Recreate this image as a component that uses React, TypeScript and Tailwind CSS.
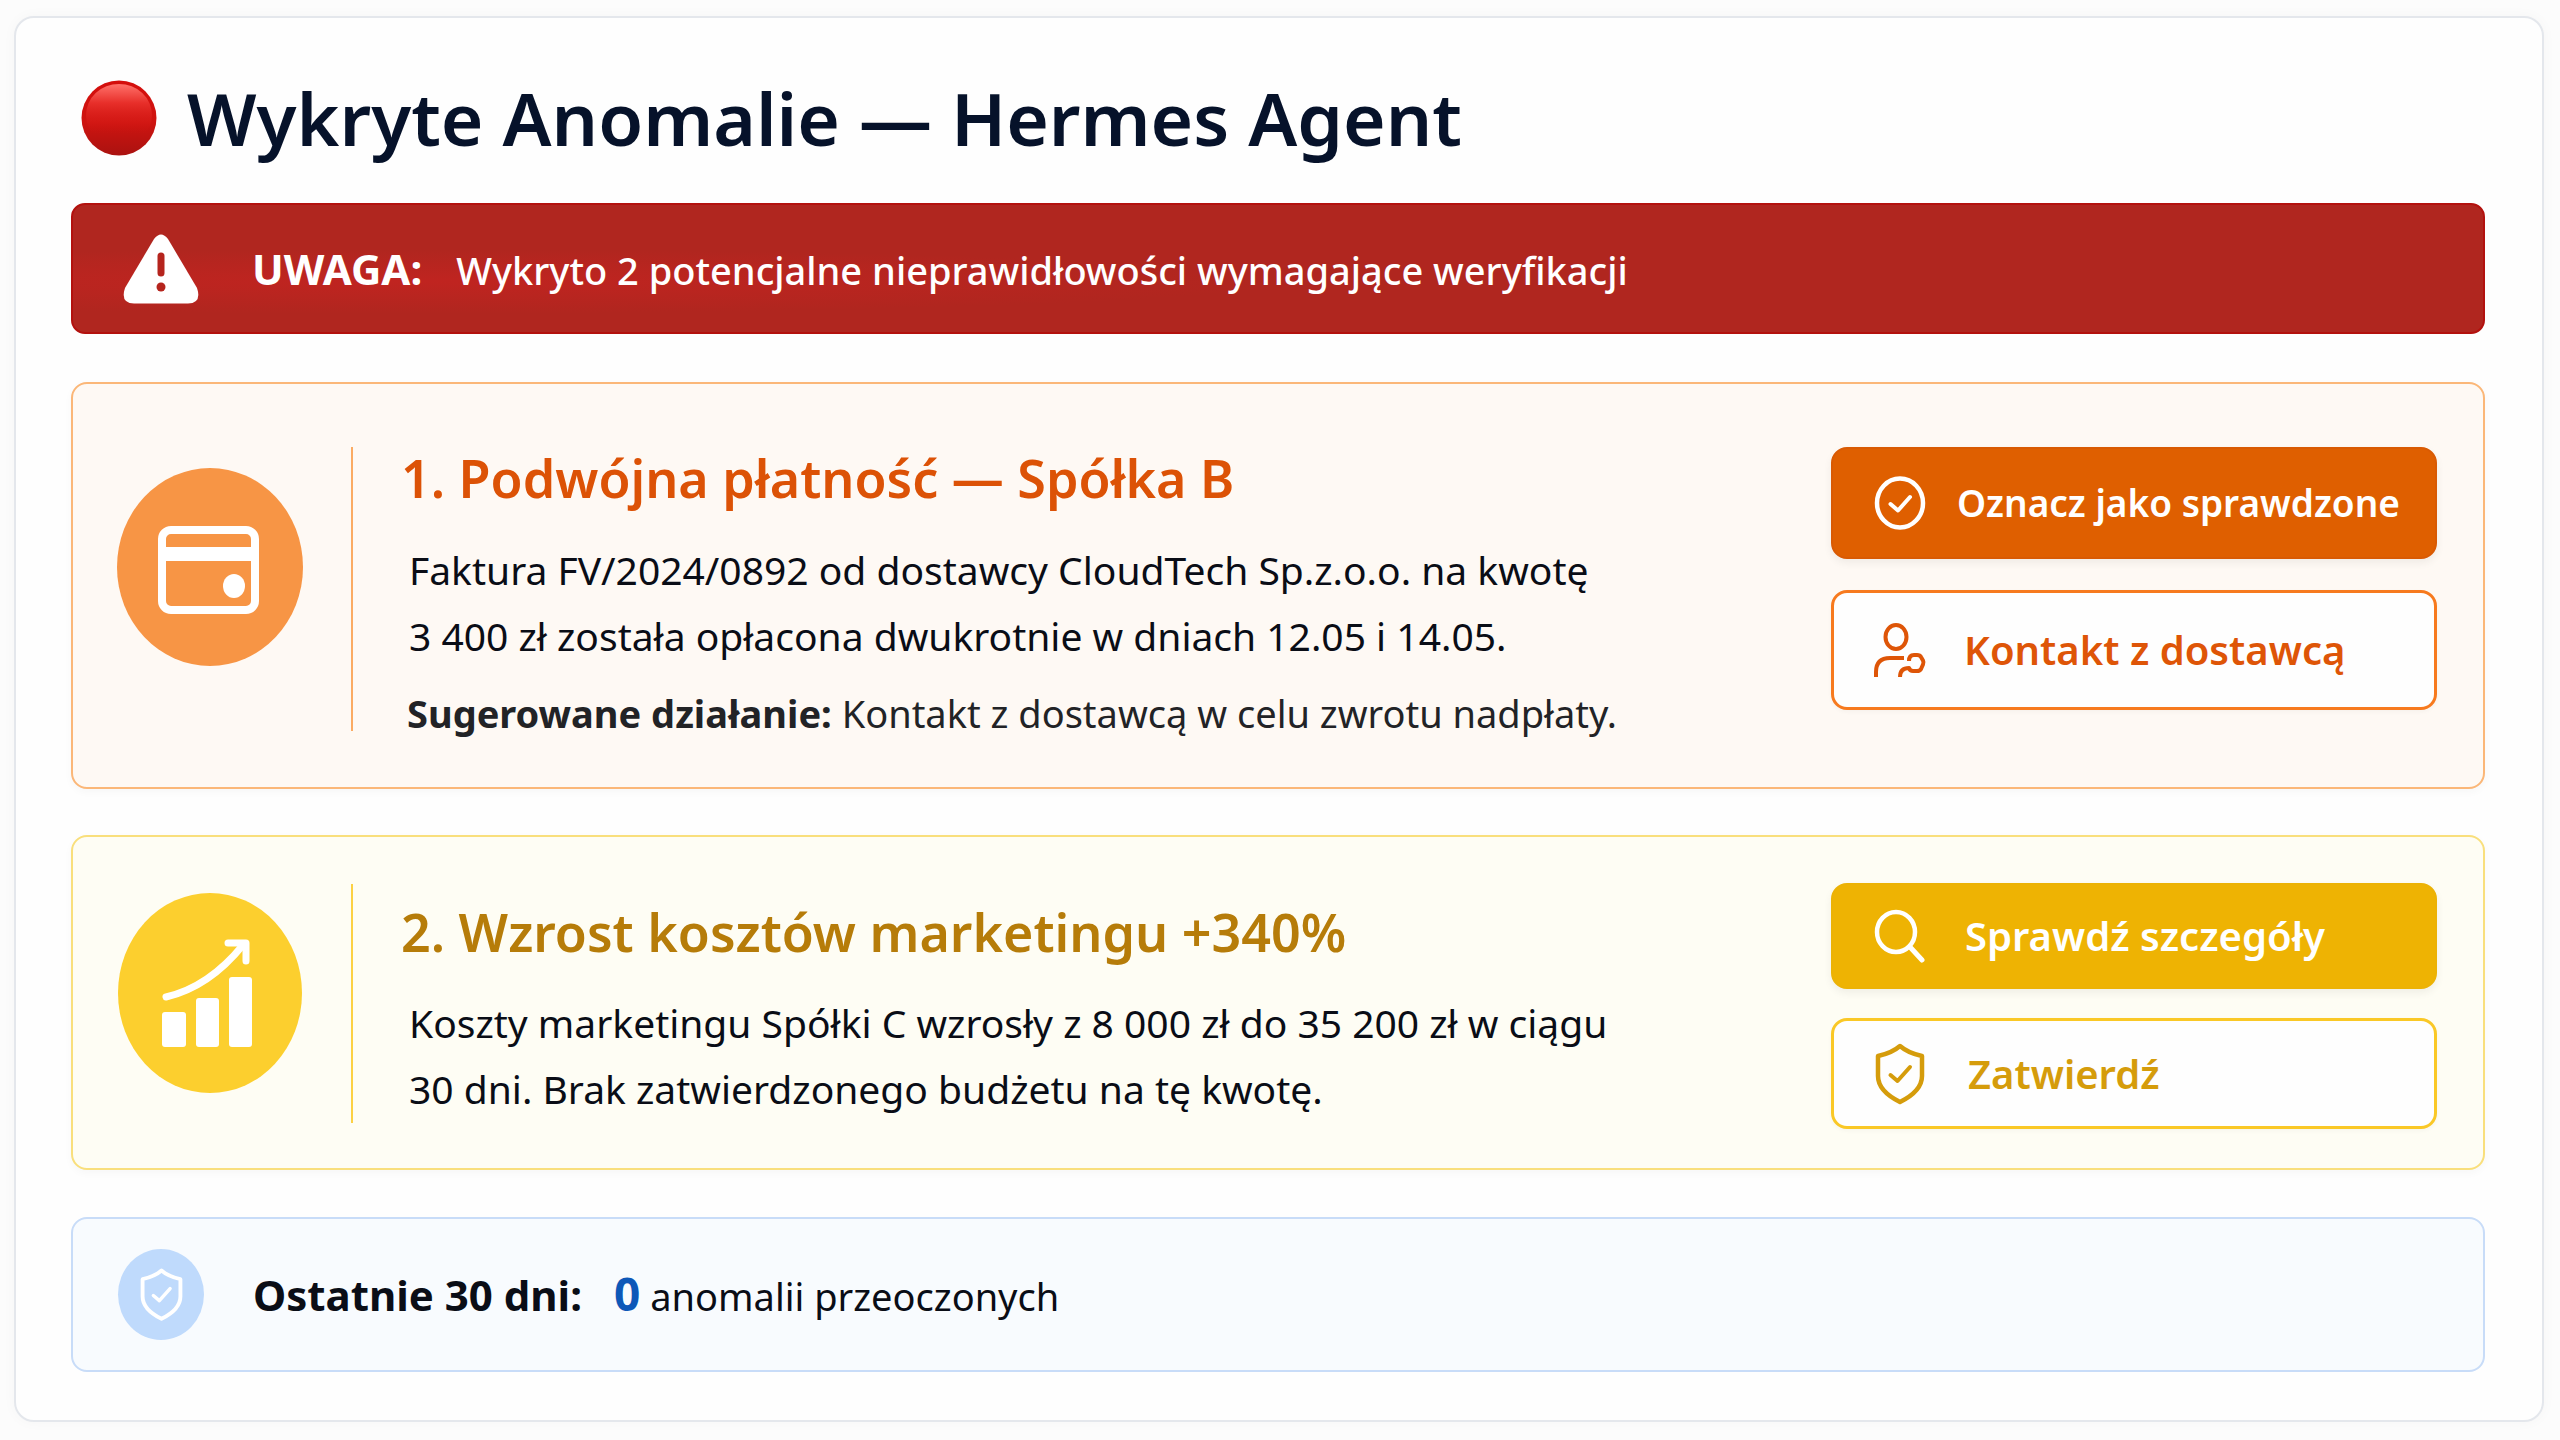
import type { ReactNode } from "react";

function RedBall() {
  return (
    <svg viewBox="0 0 76 76" className="size-[76px] shrink-0" aria-hidden="true">
      <defs>
        <linearGradient id="ball" x1="0" y1="0" x2="0" y2="1">
          <stop offset="0" stopColor="#d40e0c" />
          <stop offset="0.55" stopColor="#cf1410" />
          <stop offset="1" stopColor="#aa1210" />
        </linearGradient>
        <linearGradient id="ballShine" x1="0" y1="0" x2="0" y2="1">
          <stop offset="0" stopColor="#ff716a" />
          <stop offset="0.3" stopColor="#e8302b" />
          <stop offset="0.8" stopColor="#d11511" stopOpacity="0" />
        </linearGradient>
      </defs>
      <circle cx="38" cy="38" r="37.5" fill="url(#ball)" />
      <ellipse cx="38" cy="35" rx="33" ry="31" fill="url(#ballShine)" />
    </svg>
  );
}

function WarningIcon() {
  return (
    <svg viewBox="0 0 76 70" className="w-[76px] shrink-0" aria-hidden="true">
      <path
        d="M31 5 Q38 -4 45 5 L74 54 Q79 69 65 69.500 H11 Q-3 69 2 54 Z"
        fill="#fff"
      />
      <path d="M38 22 V39" stroke="#b5241d" strokeWidth="7" strokeLinecap="round" />
      <circle cx="38" cy="53" r="4.500" fill="#b5241d" />
    </svg>
  );
}

function WalletIcon() {
  return (
    <svg viewBox="0 0 186 198" className="w-[186px] shrink-0" aria-hidden="true">
      <ellipse cx="93" cy="99" rx="93" ry="99" fill="#f79545" />
      <rect x="45" y="62" width="93" height="80" rx="9" fill="none" stroke="#fff" strokeWidth="8" />
      <rect x="45" y="79" width="93" height="14" fill="#fff" />
      <ellipse cx="117" cy="118" rx="11" ry="12" fill="#fff" />
    </svg>
  );
}

function GrowthIcon() {
  return (
    <svg viewBox="0 0 186 200" className="w-[186px] shrink-0" aria-hidden="true">
      <ellipse cx="93" cy="100" rx="92" ry="100" fill="#fccf2e" />
      <g fill="#fff">
        <rect x="45" y="119" width="24" height="35" rx="3" />
        <rect x="79" y="105" width="23" height="49" rx="3" />
        <rect x="112" y="84" width="23" height="70" rx="3" />
      </g>
      <g fill="none" stroke="#fff" strokeWidth="7" strokeLinecap="round" strokeLinejoin="round">
        <path d="M49 104 Q92 94 126 52" />
        <path d="M111 50 H129 V68" />
      </g>
    </svg>
  );
}

function CheckCircleIcon() {
  return (
    <svg viewBox="0 0 52 54" className="w-[52px] shrink-0" fill="none" stroke="currentColor" strokeLinecap="round" strokeLinejoin="round" aria-hidden="true">
      <ellipse cx="26" cy="27" rx="23" ry="24.500" strokeWidth="4.500" />
      <path d="M16.500 28 L24 34.500 L36 21" strokeWidth="4" />
    </svg>
  );
}

function ContactIcon() {
  return (
    <svg viewBox="16 10 52 57" className="w-[52px] shrink-0 overflow-visible" fill="none" stroke="currentColor" strokeWidth="4" strokeLinejoin="round" aria-hidden="true">
      <ellipse cx="37" cy="25" rx="10.500" ry="12" />
      <path d="M17 65 V60 Q17 46 31 46 H45" />
      <path d="M41 65 Q41 56 50 56 Q51 59 54 59 H58 Q61 59 62 57 L64 52.500 Q65 50.500 64 48.500 L62 45 Q61 43 58 43 H55 Q50 43 50 49" />
    </svg>
  );
}

function SearchIcon() {
  return (
    <svg viewBox="0 0 52 54" className="w-[52px] shrink-0" fill="none" stroke="currentColor" strokeLinecap="round" aria-hidden="true">
      <ellipse cx="22" cy="23" rx="19" ry="20" strokeWidth="4.500" />
      <path d="M36 38 L48 51" strokeWidth="5" />
    </svg>
  );
}

function ShieldIcon({ className }: { className: string }) {
  return (
    <svg viewBox="0 0 50 62" className={className} fill="none" stroke="currentColor" strokeLinejoin="round" aria-hidden="true">
      <path d="M25 3 Q33 10 47 13 V33 Q47 48 25 59 Q3 48 3 33 V13 Q17 10 25 3 Z" strokeWidth="4.500" />
      <path d="M15.500 32 L22.500 38 L35 24" strokeWidth="4" strokeLinecap="round" />
    </svg>
  );
}

type ActionProps = { icon: ReactNode; className: string; children: ReactNode };

function Action({ icon, className, children }: ActionProps) {
  return (
    <button type="button" className={`flex w-full items-center whitespace-nowrap rounded-2xl pl-[41px] text-left font-semibold ${className}`}>
      {icon}
      {children}
    </button>
  );
}

export default function App() {
  return (
    <div className="min-h-screen bg-[#fcfcfc] pt-4 pr-4 pb-[18px] pl-[14px] font-['Noto_Sans',sans-serif] text-[#0a0d16]">
      <main className="rounded-[20px] border-2 border-[#e4e7ec] bg-[#fefefe] pt-[58px] pr-[57px] pb-12 pl-[55px] shadow-[0_0_14px_rgba(0,0,0,0.03)]">
        <header className="flex items-center gap-[30px] pl-[10px]">
          <RedBall />
          <h1 className="text-[73px] leading-[84px] font-semibold text-[#06122a]">Wykryte Anomalie — Hermes Agent</h1>
        </header>

        <section role="alert" className="mt-[43px] flex h-[131px] items-center rounded-[14px] border-2 border-[#b3110e] bg-[#b2251e] bg-radial-[at_14%_60%] from-[#c02420] to-[#b0261f] to-30% pl-[50px] text-[38px] text-white">
          <WarningIcon />
          <p className="ml-[53px] flex items-baseline font-medium">
            <strong className="mr-[34px] text-[42px] font-bold">UWAGA:</strong>
            Wykryto 2 potencjalne nieprawidłowości wymagające weryfikacji
          </p>
        </section>

        <article className="mt-12 flex items-start rounded-2xl border-2 border-[#fbb778] bg-[#fef9f4] pt-[58px] pr-[46px] pb-[41px] pl-11 shadow-[0_3px_8px_rgba(0,0,0,0.03)]">
          <div className="mt-[26px]">
            <WalletIcon />
          </div>
          <div className="mt-[5px] ml-12 h-[284px] w-0.5 shrink-0 bg-[#fbab63]" />
          <div className="ml-12 flex-1">
            <h2 className="text-[52px] leading-[72px] font-semibold text-[#dc5206]">1. Podwójna płatność — Spółka B</h2>
            <p className="mt-[23px] pl-2 text-[39px] leading-[66px]">
              Faktura FV/2024/0892 od dostawcy CloudTech Sp.z.o.o. na kwotę
              <br />
              3 400 zł została opłacona dwukrotnie w dniach 12.05 i 14.05.
            </p>
            <p className="mt-[11px] pl-1.5 text-[38px] leading-[66px] text-[#222326]">
              <strong className="font-bold">Sugerowane działanie:</strong> Kontakt z dostawcą w celu zwrotu nadpłaty.
            </p>
          </div>
          <div className="mt-[5px] flex w-[606px] shrink-0 flex-col gap-[31px]">
            <Action icon={<CheckCircleIcon />} className="h-28 gap-[31px] border-2 border-[#d95a03] bg-[#df5f00] text-[37px] text-white shadow-[0_4px_8px_rgba(0,0,0,0.06)]">
              Oznacz jako sprawdzone
            </Action>
            <Action icon={<ContactIcon />} className="h-[120px] gap-[37px] border-[3px] border-[#f77a1e] bg-[#fefefe] text-[40px] text-[#de5507] shadow-[0_2px_4px_rgba(0,0,0,0.03)]">
              Kontakt z dostawcą
            </Action>
          </div>
        </article>

        <article className="mt-[46px] flex items-start rounded-2xl border-2 border-[#f9df7c] bg-[#fefdf4] pt-[46px] pr-[46px] pb-[39px] pl-11 shadow-[0_3px_8px_rgba(0,0,0,0.03)]">
          <div className="mt-[10px]">
            <GrowthIcon />
          </div>
          <div className="mt-px ml-12 h-[239px] w-0.5 shrink-0 bg-[#fcd144]" />
          <div className="mt-[13px] ml-12 flex-1">
            <h2 className="text-[52px] leading-[72px] font-semibold text-[#b67c09]">2. Wzrost kosztów marketingu +340%</h2>
            <p className="mt-[22px] pl-2 text-[39px] leading-[66px]">
              Koszty marketingu Spółki C wzrosły z 8 000 zł do 35 200 zł w ciągu
              <br />
              30 dni. Brak zatwierdzonego budżetu na tę kwotę.
            </p>
          </div>
          <div className="flex w-[606px] shrink-0 flex-col gap-[29px]">
            <Action icon={<SearchIcon />} className="h-[106px] gap-[39px] border-2 border-[#ecb205] bg-[#eeb303] text-[40px] text-white shadow-[0_4px_8px_rgba(0,0,0,0.06)]">
              Sprawdź szczegóły
            </Action>
            <Action icon={<ShieldIcon className="w-[50px] shrink-0" />} className="h-[111px] gap-[43px] border-[3px] border-[#fac826] bg-[#fefefe] text-[40px] text-[#d59c0b] shadow-[0_2px_4px_rgba(0,0,0,0.03)]">
              Zatwierdź
            </Action>
          </div>
        </article>

        <footer className="mt-[47px] flex h-[155px] items-center rounded-2xl border-2 border-[#c8dcf8] bg-[#f8fbfe] pl-[45px] text-[38px]">
          <span className="flex h-[91px] w-[86px] shrink-0 items-center justify-center rounded-[50%] bg-[#bfdafc] text-white">
            <ShieldIcon className="w-[43px]" />
          </span>
          <p className="ml-[49px] flex items-baseline">
            <strong className="text-[42px] font-bold">Ostatnie 30 dni:</strong>
            <strong className="ml-8 text-[46px] leading-[60px] font-bold text-[#0d58b8]">0</strong>
            <span className="ml-2.5">anomalii przeoczonych</span>
          </p>
        </footer>
      </main>
    </div>
  );
}
